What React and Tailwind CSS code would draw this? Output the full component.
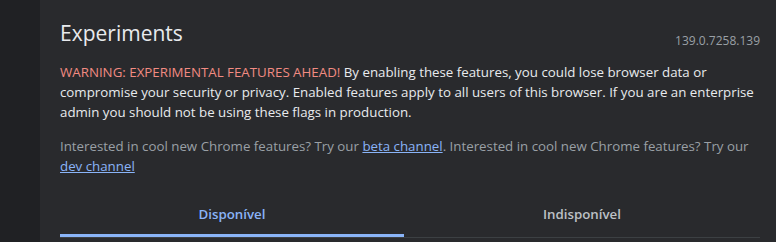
export default function App() {
  return (
    <div className="flex h-[242px] w-[776px] overflow-hidden bg-[#202124] font-['Open_Sans',sans-serif] text-[13.3px] text-[#e8eaed]">
      {/* Side strip */}
      <div className="w-[40px] shrink-0 bg-[#202124]" />

      {/* Main panel */}
      <main className="flex-1 bg-[#292a2d] pl-[20px] pr-[16px] pt-[17px]">
        <div className="flex items-end justify-between">
          <h1 className="text-[21px] leading-[32px] text-[#e8eaed]">Experiments</h1>
          <span className="mb-[-1px] text-[12px] text-[#9aa0a6]">139.0.7258.139</span>
        </div>

        <p className="mt-[13px] leading-[20px]">
          <span className="text-[#f28b82]">WARNING: EXPERIMENTAL FEATURES AHEAD!</span> By enabling these features, you could lose browser data or compromise your security or privacy. Enabled features apply to all users of this browser. If you are an enterprise admin you should not be using these flags in production.
        </p>

        <p className="mt-[14px] leading-[20px] text-[#9aa0a6]">
          Interested in cool new Chrome features? Try our <a className="text-[#8ab4f8] underline">beta channel</a>. Interested in cool new Chrome features? Try our <a className="text-[#8ab4f8] underline">dev channel</a>
        </p>

        {/* Tabs */}
        <div className="mt-[29px] flex border-b border-[#3c4043]">
          <button className="w-[344px] border-b-[3px] border-[#8ab4f8] pb-[9px] text-[13.3px] font-semibold text-[#8ab4f8]">
            Disponível
          </button>
          <button className="flex-1 border-b-[3px] border-transparent pb-[9px] text-[13.3px] font-semibold text-[#bdc1c6]">
            Indisponível
          </button>
        </div>
      </main>
    </div>
  );
}
